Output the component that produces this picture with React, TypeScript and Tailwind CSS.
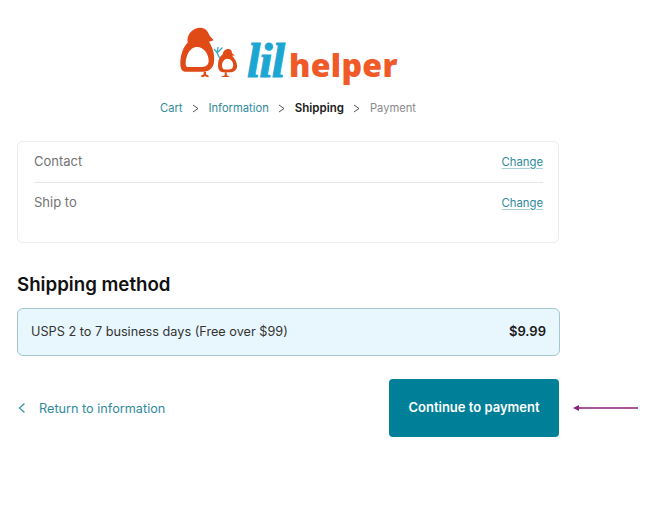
import React from "react";

function Birds() {
  return (
    <svg width="90" height="65" viewBox="0 0 270 195" className="shrink-0">
      {/* big bird */}
      <path
        fillRule="evenodd"
        fill="#df4a17"
        d="M16 125 C16 98 24 76 38 62 C34 38 52 17 76 17 C92 17 100 29 103 40 L116 55 L102 59 C112 75 120 95 117 120 C115 138 102 149 85 149 L30 149 C21 149 16 138 16 125 Z M32 125 C32 100 45 78 62 75 C85 72 102 95 101 118 C100 130 92 135 82 135 L38 135 C34 135 32 130 32 125 Z"
      />
      <path d="M86 149 L93 149 L93 157 L103 163 L97 166 L90 162 L84 166 L76 163 L86 157 Z" fill="#df4a17" />
      {/* sprig */}
      <path d="M133 106 L126 92 M126 92 L118 82 M126 92 L129 76 M129 90 L141 78" stroke="#3aa9c9" strokeWidth="4" fill="none" strokeLinecap="round" />
      {/* small bird */}
      <g transform="translate(-33 -11) scale(1.2 1.08)">
        <path
          fillRule="evenodd"
          fill="#df4a17"
          d="M135 130 C135 115 140 105 147 100 C147 90 155 84 162 85 C168 86 170 92 170 97 L177 103 L170 104 C180 115 185 130 182 138 C178 148 170 150 165 150 L150 150 C140 150 135 142 135 130 Z M145 130 C145 120 152 112 158 112 C168 112 174 122 173 132 C172 140 168 142 162 142 L152 142 C147 142 145 137 145 130 Z"
        />
        <path d="M152 150 L157 150 L157 158 L165 163 L142 163 L152 158 Z" fill="#df4a17" />
      </g>
    </svg>
  );
}

function Row({ label }: { label: string }) {
  return (
    <div className="flex items-center justify-between h-[40px]">
      <span className="text-[13px] text-[#737373]">{label}</span>
      <a className="text-[11.3px] text-[#2f8a9c] underline decoration-[#a9cfd8] underline-offset-2">Change</a>
    </div>
  );
}

function Chevron() {
  return (
    <svg width="7" height="9" viewBox="0 0 7 9" fill="none" stroke="#555555" strokeWidth="1">
      <path d="M1 1 L6 4.5 L1 8" />
    </svg>
  );
}

export default function App() {
  return (
    <div className="h-[532px] w-[665px] bg-white overflow-hidden" style={{ fontFamily: "Inter, 'Liberation Sans', sans-serif" }}>
      <div className="w-[542px] ml-[17px] pt-[22px]">
        <div className="flex items-start h-[65px] pl-[158px]">
          <Birds />
          <span
            className="ml-[-18px] mt-[15px] text-[48px] leading-[48px] font-bold italic text-[#1ca6d2] tracking-[-1px] [-webkit-text-stroke:1px_#1ca6d2]"
            style={{ fontFamily: "'Liberation Serif', serif" }}
          >
            lil
          </span>
          <span
            className="ml-[5px] mt-[21px] text-[32px] leading-[44px] font-extrabold text-[#f05a28] tracking-[0.3px]"
            style={{ fontFamily: "'Open Sans', sans-serif" }}
          >
            helper
          </span>
        </div>
        <nav className="mt-[13px] h-[16px] flex items-center justify-center text-[11.2px] leading-4 gap-[9.5px]">
          <span className="text-[#2f8a9c]">Cart</span>
          <Chevron />
          <span className="text-[#2f8a9c]">Information</span>
          <Chevron />
          <span className="font-semibold text-[11.5px] text-[#1a1a1a]">Shipping</span>
          <Chevron />
          <span className="text-[#8a8a8a]">Payment</span>
        </nav>
        <section className="mt-[25px] h-[102px] rounded-[5px] border border-[#ececec] pl-4 pr-[15px]">
          <Row label="Contact" />
          <div className="border-t border-[#e6e6e6]" />
          <Row label="Ship to" />
        </section>
        <h2 className="mt-[30px] text-[18.7px] leading-6 font-semibold text-[#111111]">Shipping method</h2>
        <div className="mt-[11px] h-[48px] w-[543px] rounded-[6px] border border-[#a3c6d2] bg-[#e8f7fd] flex items-center justify-between pl-[13px] pr-[13px]">
          <span className="text-[12.7px] text-[#333333]">USPS 2 to 7 business days (Free over $99)</span>
          <span className="text-[13px] font-semibold text-[#1a1a1a]">$9.99</span>
        </div>
        <div className="mt-[23px] flex items-center justify-between w-[542px] relative">
          <a className="mt-[1px] flex items-center text-[12.7px] text-[#2f8a9c]">
            <svg width="8" height="12" viewBox="0 0 8 12" className="ml-[1px] mr-[13px]" fill="none" stroke="#3a8fa3" strokeWidth="1.2">
              <path d="M6.5 1.5 L1.5 6 L6.5 10.5" />
            </svg>
            Return to information
          </a>
          <button className="w-[170px] h-[58px] rounded-[4px] bg-[#007f98] text-white text-[13px] font-semibold">Continue to payment</button>
          <svg width="68" height="8" viewBox="0 0 68 8" className="absolute left-[556px] top-[25px]" fill="#84217f">
            <path d="M0 4 L6 1 L6 3.2 L65 3.2 L65 4.8 L6 4.8 L6 7 Z" />
          </svg>
        </div>
      </div>
    </div>
  );
}
